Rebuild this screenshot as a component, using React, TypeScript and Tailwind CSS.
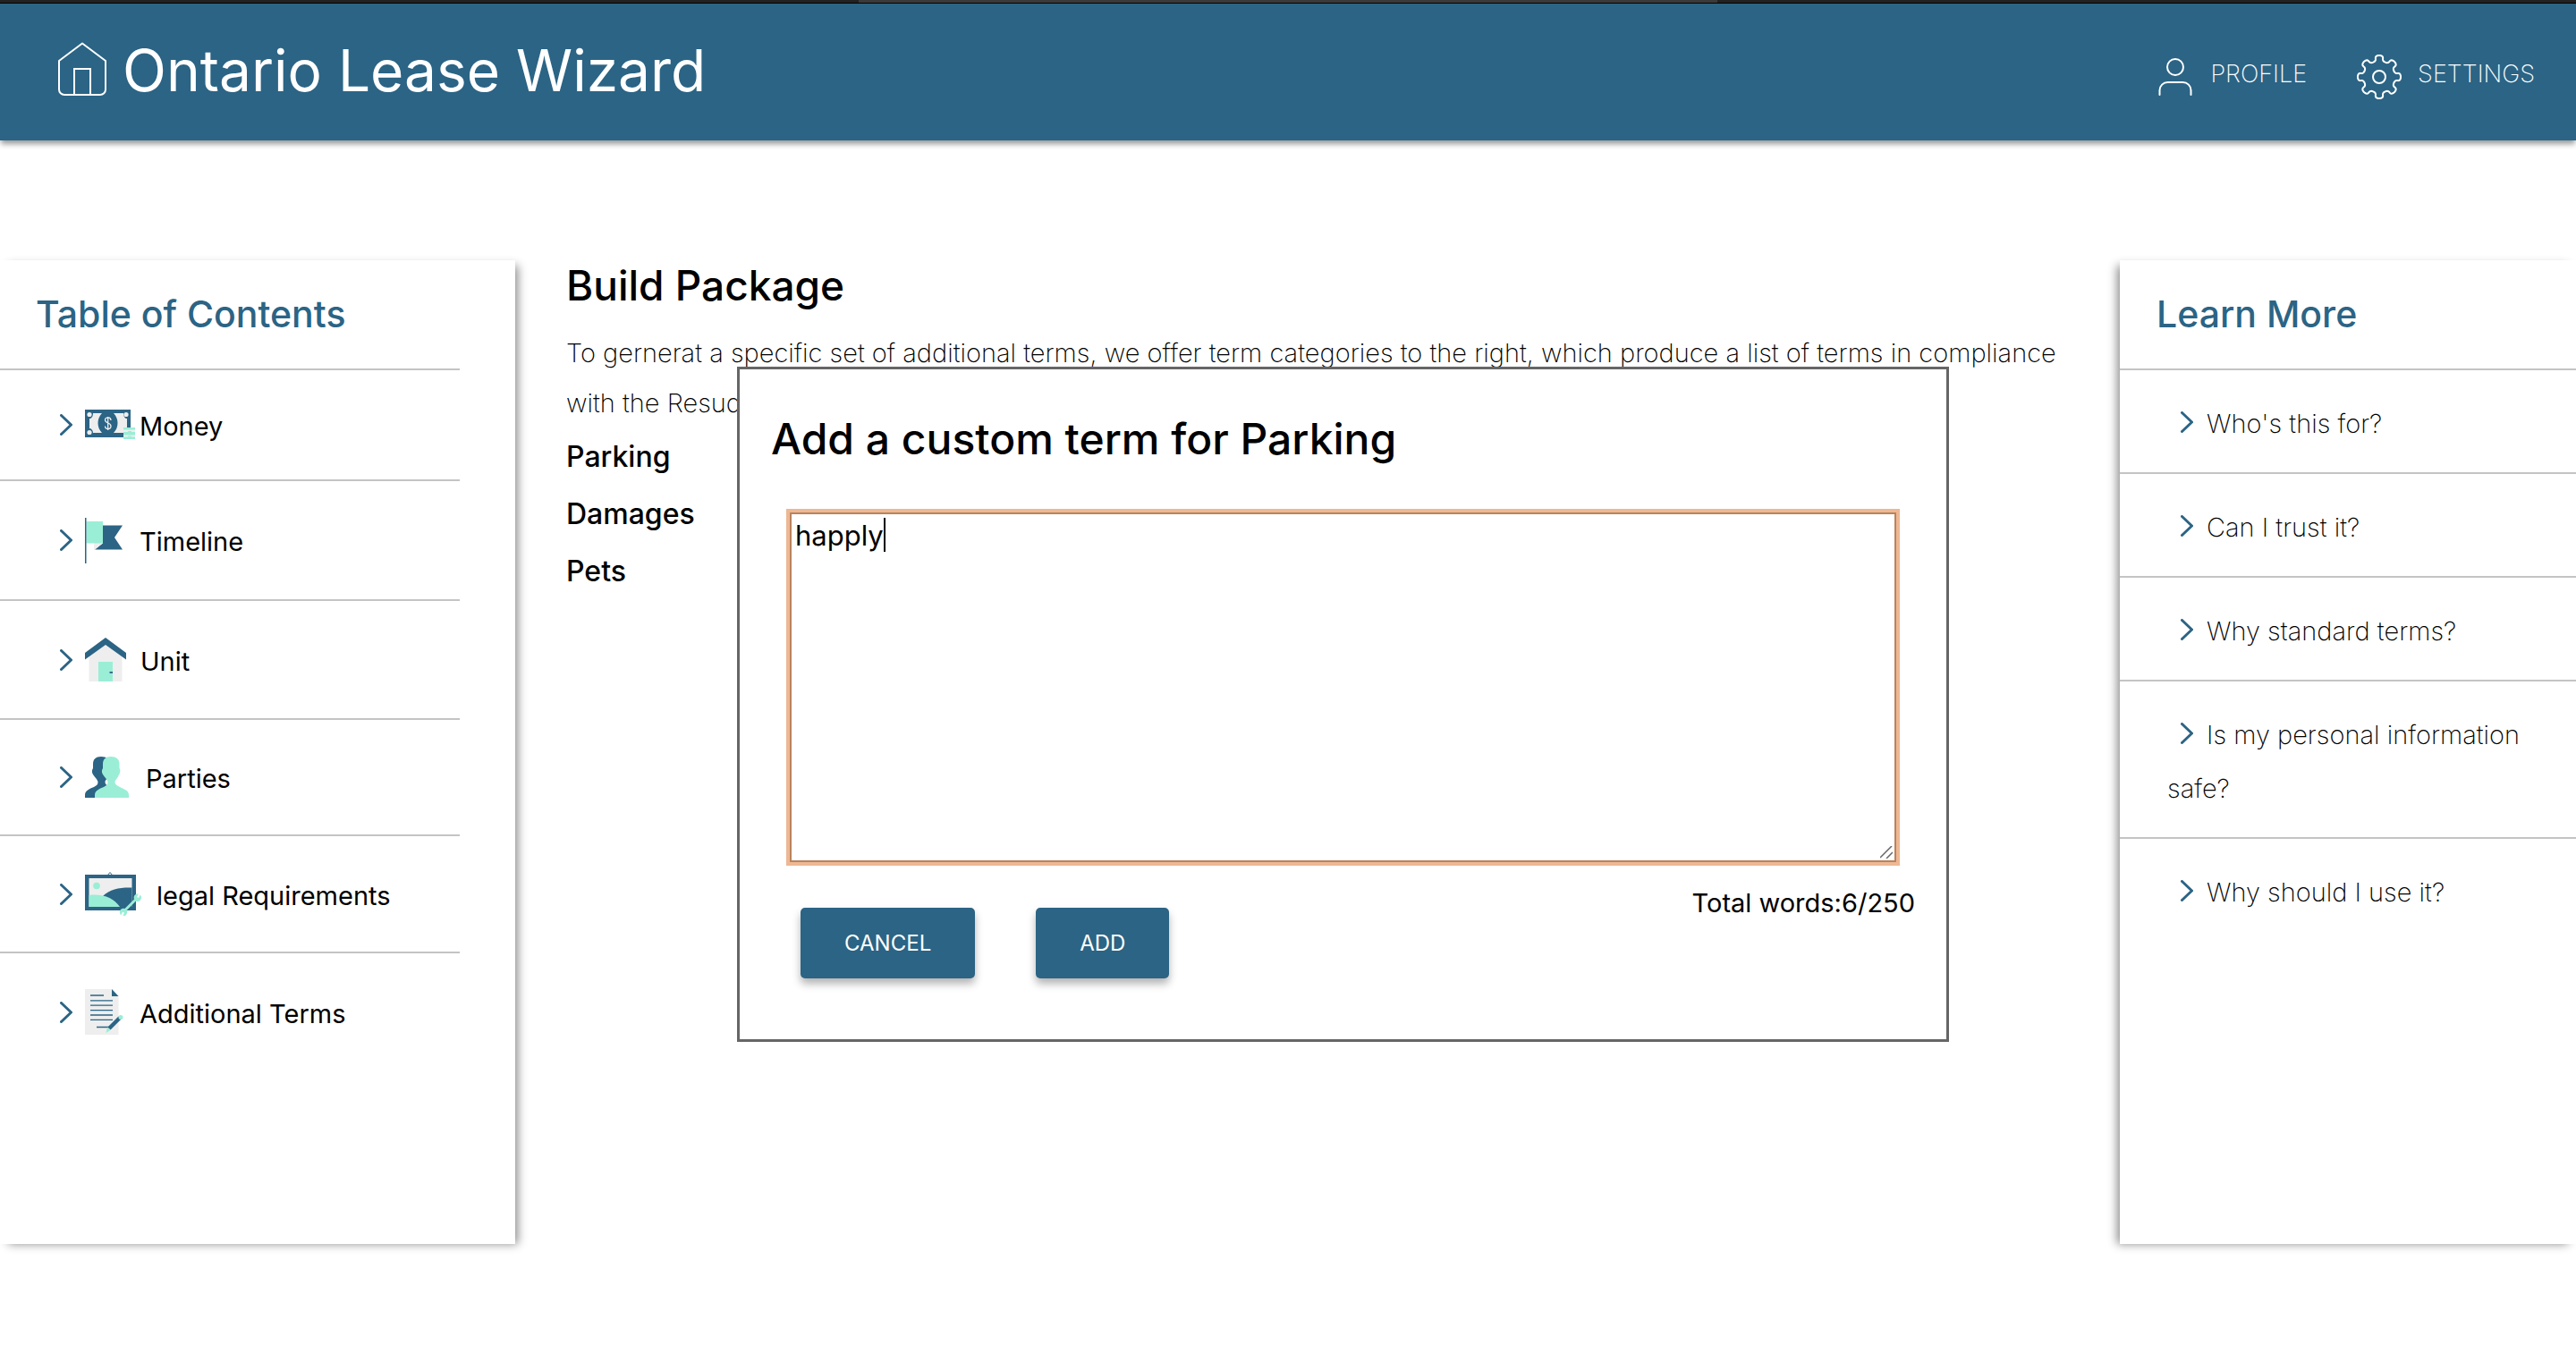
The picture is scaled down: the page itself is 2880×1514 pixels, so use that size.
import React, { useEffect, useRef, useState } from "react";

const BLUE = "#2b6485";
const MINT = "#9aeed6";
const PALE = "#eeeeee";

function HomeIcon() {
  return (
    <svg className="h-[60px] w-[54px]" viewBox="0 0 54 60" fill="none" stroke="white" strokeWidth="2" aria-hidden="true">
      <path d="M27 1.5 53 21v32a6 6 0 0 1-6 6H7a6 6 0 0 1-6-6V21Z" strokeLinejoin="round" />
      <path d="M18 59V30h18v29" />
    </svg>
  );
}

function ProfileIcon() {
  return (
    <svg className="mt-1.5 h-[42px] w-[38px]" viewBox="0 0 38 42" fill="none" stroke="white" strokeWidth="2" strokeLinecap="round" aria-hidden="true">
      <circle cx="19" cy="10" r="9" />
      <path d="M1.500 41v-5a9 9 0 0 1 9-9h17a9 9 0 0 1 9 9v5" />
    </svg>
  );
}

function SettingsIcon() {
  const pts: string[] = [];
  for (let i = 0; i <= 192; i++) {
    const a = (i / 192) * Math.PI * 2;
    const r = 20.9 + 3.2 * Math.cos(a * 8);
    const t = a + 0.055 * Math.sin(a * 16);
    pts.push((25 + r * Math.sin(t)).toFixed(2) + " " + (25 - r * Math.cos(t)).toFixed(2));
  }
  return (
    <svg className="mt-1.5 size-[50px]" viewBox="0 0 50 50" fill="none" stroke="white" strokeWidth="2" strokeLinejoin="round" aria-hidden="true">
      <path d={"M" + pts.join("L") + "Z"} />
      <circle cx="25" cy="25" r="7" />
    </svg>
  );
}

function Chevron() {
  return (
    <svg className="h-6 w-3.5 shrink-0" viewBox="0 0 14 24" fill="none" stroke={BLUE} strokeWidth="3" strokeLinecap="round" strokeLinejoin="round" aria-hidden="true">
      <path d="M1.500 1.500 12.500 12 1.500 22.500" />
    </svg>
  );
}

function MoneyIcon() {
  return (
    <svg className="h-[34px] w-14" viewBox="0 0 56 34" aria-hidden="true">
      <path fill={BLUE} d="M0 0h51v31H0z" />
      <path fill={PALE} d="M9 4h10c-6 6-6 16 0 22H9c0-3-2-5-4-5V10c2 0 4-2 4-6ZM43 4H32c6 6 6 16 0 22h11c0-3 2-5 4-5V10c-2 0-4-2-4-6Z" />
      <g fill={PALE}>
        <circle cx="5" cy="5.500" r="2.600" />
        <circle cx="46" cy="5.500" r="2.600" />
        <circle cx="5" cy="25.500" r="2.600" />
      </g>
      <path d="M29 12c0-4-6.500-4-6.500-.5 0 4.500 6.500 2.500 6.500 7 0 4-6.500 4-6.500 0M25.700 8v15" fill="none" stroke={PALE} strokeWidth="1.300" />
      <path fill={MINT} d="M43 20h13v13H43z" />
      <path fill={PALE} d="M43 22.500h13v2.500H43zM43 28.500h13v2H43z" />
      <path fill={MINT} d="M48 24h4v1h-4zM48 29.500h4v1h-4z" />
    </svg>
  );
}

function FlagIcon() {
  return (
    <svg className="h-[51px] w-[42px]" viewBox="0 0 42 51" aria-hidden="true">
      <path fill={BLUE} d="M18 8.500h24l-9 13.500 9 13.500H11l9-7Z" />
      <path fill={PALE} d="M10 28h10l-9 7.500h-1z" />
      <path fill={MINT} d="M1.500 4H20v24.500H1.500z" />
      <path fill={BLUE} d="M0 0h1.500v51H0z" />
    </svg>
  );
}

function HouseIcon() {
  return (
    <svg className="h-[49px] w-[46px]" viewBox="0 0 46 49" aria-hidden="true">
      <path fill={PALE} d="M4.500 18 23 5l18.500 13v31h-37z" />
      <path fill={BLUE} d="M0 17 23 0l23 17v7.500L23 8 0 24.500z" />
      <path fill={MINT} d="M15 27h16v22H15z" />
      <path fill={BLUE} d="M27.500 38H31v1.800h-3.500z" />
    </svg>
  );
}

function PeopleIcon() {
  const head =
    "M18 0c6 0 9.500 3 9.500 8v5c1.500 1.500 1 6-1 8-.5 3-4 5-4 7.500s2 3.500 5.500 5.500c5 2.500 10 4 10 9V46H0v-3c0-5 5-7 10-9 3-1.500 4.500-3 4.500-5.500S10 22 9 20c-1.500-2-1.500-5 0-7V8c0-5 3-8 9-8Z";
  return (
    <svg className="h-[46px] w-[49px]" viewBox="0 0 49 46" aria-hidden="true">
      <path fill={BLUE} d={head} />
      <path fill={MINT} transform="translate(11)" d={head} />
    </svg>
  );
}

function PictureIcon() {
  return (
    <svg className="h-[49px] w-16" viewBox="0 0 64 49" aria-hidden="true">
      <path d="M25 4l3-3.500L31 4" fill="none" stroke={BLUE} />
      <path fill={BLUE} d="M0 3h57v40H0z" />
      <path fill={PALE} d="M4.500 7h48v32h-48z" />
      <circle cx="13" cy="15.500" r="3.800" fill={MINT} />
      <path fill={BLUE} d="M20 27C28 19 40 17 52.500 17.500V39H36Z" />
      <path fill={MINT} d="M4.500 26C20 24 32 29 39 39H4.500Z" />
      <path d="M44 43.500 57.500 30" stroke={MINT} strokeWidth="2.800" />
      <g fill={MINT}>
        <circle cx="43" cy="45" r="4.200" />
        <circle cx="58.800" cy="28.800" r="4.200" />
      </g>
      <path d="M43 45.200 41 49.500M59 28.500 61 24.500" stroke="white" strokeWidth="2.200" />
    </svg>
  );
}

function DocumentIcon() {
  return (
    <svg className="h-[51px] w-[43px]" viewBox="0 0 43 51" aria-hidden="true">
      <path fill={PALE} d="M0 0h30l7.500 8v43H0z" />
      <path fill={BLUE} d="M30 0l7.500 8H30z" />
      <path d="M6 7h15M6 12.800h25M6 18.200h25M6 23.600h25M6 29h25M6 34.400h25M13 42.500h14" stroke={BLUE} strokeWidth="1.300" />
      <path d="M27 44 39 32" stroke={BLUE} strokeWidth="4.500" />
      <path fill={MINT} d="M25 42.500l3.500 3.500-5 3z" />
      <circle cx="40" cy="31.500" r="2.500" fill={MINT} />
    </svg>
  );
}

const contents = [
  { label: "Money", icon: <MoneyIcon />, box: "h-[42px] w-[61px]" },
  { label: "Timeline", icon: <FlagIcon />, box: "h-[52px] w-[61px]" },
  { label: "Unit", icon: <HouseIcon />, box: "h-[51px] w-[62px]" },
  { label: "Parties", icon: <PeopleIcon />, box: "h-12 w-[68px]" },
  { label: "legal Requirements", icon: <PictureIcon />, box: "h-[49px] w-[80px]" },
  { label: "Additional Terms", icon: <DocumentIcon />, box: "h-[51px] w-[61px]" },
];

const questions = [
  "Who's this for?",
  "Can I trust it?",
  "Why standard terms?",
  "Is my personal information safe?",
  "Why should I use it?",
];

export default function App() {
  const [term, setTerm] = useState("happly");
  const box = useRef<HTMLTextAreaElement>(null);

  useEffect(() => {
    const el = box.current;
    if (el) {
      el.focus();
      el.setSelectionRange(el.value.length, el.value.length);
    }
  }, []);

  return (
    <div className="min-h-screen bg-white pb-[123px] font-['Inter',sans-serif] text-black">
      <div className="flex h-1 border-b border-black bg-[#222222]">
        <div className="w-1/3" />
        <div className="w-1/3 bg-[#3a3a3a]" />
      </div>
      <header className="flex h-[153px] items-center justify-between bg-[#2b6485] pr-[46px] pl-[65px] text-white shadow-[0_5px_6px_-1px_rgba(0,0,0,0.4)]">
        <a href="#home" className="flex items-center gap-[18px] pb-2">
          <HomeIcon />
          <h1 className="pt-1 text-[64px] leading-[72px] font-normal">Ontario Lease Wizard</h1>
        </a>
        <nav className="flex items-center gap-[56px] pt-1 text-[27px] leading-8 font-extralight">
          <a href="#profile" className="flex items-center gap-5">
            <ProfileIcon />
            PROFILE
          </a>
          <a href="#settings" className="flex items-center gap-[18px]">
            <SettingsIcon />
            SETTINGS
          </a>
        </nav>
      </header>

      <div className="mt-[134px] flex min-h-[1100px] items-stretch">
        <aside className="w-[576px] shrink-0 bg-white shadow-[6px_3px_10px_-3px_rgba(0,0,0,0.45)]">
          <h2 className="py-9 pl-10 text-[41px] leading-[49px] font-medium text-[#2b6485]">Table of Contents</h2>
          <ul className="mr-[62px]">
            {contents.map((c) => (
              <li key={c.label} className="border-t-2 border-[#c4c4c4] py-10">
                <a href="#section" className="flex items-center pl-[67px] text-[29px] leading-8">
                  <Chevron />
                  <span className={"ml-3.5 flex shrink-0 items-center " + c.box}>{c.icon}</span>
                  <span className="pt-1">{c.label}</span>
                </a>
              </li>
            ))}
          </ul>
        </aside>

        <main className="relative min-w-0 flex-1 px-[57px]">
          <h2 className="text-[46px] leading-[56px] font-medium">Build Package</h2>
          <p className="mt-5 text-[29px] leading-[56px] font-extralight">
            To gernerat a specific set of additional terms, we offer term categories to the right, which produce a list of
            terms in compliance with the Resudential Tenancies Act.
          </p>
          <ul className="text-[32px] leading-[64px] font-medium">
            <li>Parking</li>
            <li>Damages</li>
            <li>Pets</li>
          </ul>

          <div
            role="dialog"
            aria-labelledby="dialog-title"
            className="absolute top-[119px] right-[191px] left-[248px] border-[3px] border-[#666666] bg-white px-[35px] pt-[46px] pb-[68px]"
          >
            <h2 id="dialog-title" className="text-[48px] leading-[64px] font-medium">
              Add a custom term for Parking
            </h2>
            <div className="relative mt-[50px] mr-[21px] ml-[21px]">
              <textarea
                ref={box}
                aria-label="Custom term"
                value={term}
                onChange={(e) => setTerm(e.target.value)}
                className="block h-[391px] w-full resize-none border-2 border-[#b9835d] px-1 text-[31px] leading-[48px] caret-transparent shadow-[0_0_0_4px_#edb893] outline-none"
              />
              <div
                aria-hidden="true"
                className="pointer-events-none absolute inset-0 flex border-2 border-transparent px-1 text-[31px] leading-[48px] text-transparent"
              >
                {term}
                <span className="mt-1 h-[38px] w-0.5 bg-black" />
              </div>
              <svg className="absolute right-1 bottom-1 size-3.5" viewBox="0 0 14 14" stroke="#666666" strokeWidth="1.500" aria-hidden="true">
                <path d="M0 13 13 0M7 14l7-7" />
              </svg>
            </div>
            <div className="flex items-start justify-between">
              <div className="mt-[51px] ml-[33px] flex gap-[68px] text-[24px] leading-[79px] text-white">
                <button type="button" className="rounded-[5px] bg-[#2b6485] px-[49px] shadow-[0_6px_10px_rgba(0,0,0,0.3)]">
                  CANCEL
                </button>
                <button type="button" className="rounded-[5px] bg-[#2b6485] px-[49px] shadow-[0_6px_10px_rgba(0,0,0,0.3)]">
                  ADD
                </button>
              </div>
              <p className="mt-[29px] text-[29px] leading-[34px]">Total words:6/250</p>
            </div>
          </div>
        </main>

        <aside className="w-[510px] shrink-0 bg-white shadow-[-6px_3px_10px_-3px_rgba(0,0,0,0.45)]">
          <h2 className="py-9 pl-[41px] text-[41px] leading-[49px] font-medium text-[#2b6485]">Learn More</h2>
          <ul>
            {questions.map((q) => (
              <li key={q} className="border-t-2 border-[#c4c4c4] pt-[30px] pr-[50px] pb-6 pl-[53px]">
                <a href="#answer" className="block text-[29px] leading-[60px] font-extralight">
                  <span className="mr-[15px] ml-[15px] inline-block">
                    <Chevron />
                  </span>
                  {q}
                </a>
              </li>
            ))}
          </ul>
        </aside>
      </div>
    </div>
  );
}
